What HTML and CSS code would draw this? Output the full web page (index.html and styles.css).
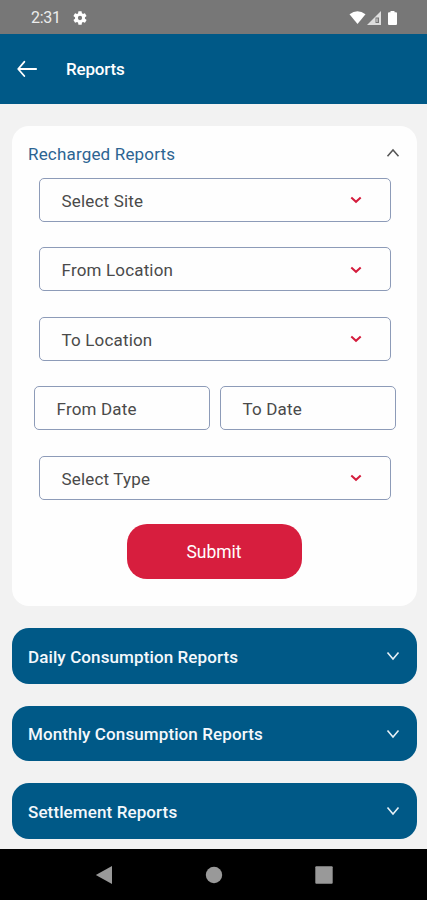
FILE: index.html
```html
<!DOCTYPE html>
<html lang="en">
<head>
<meta charset="utf-8">
<title>Reports</title>
<link rel="stylesheet" href="styles.css">
</head>
<body>
<div class="screen">
  <div class="status">
    <span class="time">2:31</span>
    <svg class="gear" width="16" height="16" viewBox="0 0 24 24"><path fill="#fff" fill-rule="evenodd" d="M19.4 13a7.500 7.500 0 0 0 0-2l2.100-1.650a.5.5 0 0 0 .12-.64l-2-3.460a.5.5 0 0 0-.61-.22l-2.490 1a7.300 7.300 0 0 0-1.690-.98l-.38-2.650A.5.5 0 0 0 14 2h-4a.5.5 0 0 0-.49.42l-.38 2.650c-.61.25-1.170.59-1.690.98l-2.490-1a.5.5 0 0 0-.61.22l-2 3.460a.5.5 0 0 0 .12.640L4.600 11a7.500 7.500 0 0 0 0 2l-2.110 1.650a.5.5 0 0 0-.12.640l2 3.460c.12.220.39.300.61.220l2.490-1c.52.400 1.080.730 1.690.980l.38 2.650c.03.240.24.420.49.420h4c.25 0 .46-.18.490-.42l.38-2.650a7.300 7.300 0 0 0 1.690-.98l2.490 1c.23.090.49 0 .61-.22l2-3.460a.5.5 0 0 0-.12-.64zM12 15.200a3.200 3.200 0 1 1 0-6.400 3.200 3.200 0 0 1 0 6.400z"/></svg>
    <svg class="signals" width="50" height="16" viewBox="0 0 50 16"><path fill="#fff" d="M.5 4.300Q8.500-1.700 16.500 4.300L8.500 14z"/><path fill="#dedede" d="M32 1v14H18z"/><path fill="#777" d="M26.500 7.500h3.500v5.500h-3.500z"/><path fill="#e8e8e8" d="M27.500 8.500h1v3.500h-1z"/><path fill="#fff" d="M41.500 1h4v1.200h1.500a1 1 0 0 1 1 1V14a1 1 0 0 1-1 1H40a1 1 0 0 1-1-1V3.200a1 1 0 0 1 1-1h1.500z"/></svg>
  </div>
  <header class="appbar">
    <svg width="20" height="18" viewBox="0 0 20 18"><path class="line" d="M19.200 9H1.300M7.300 1.800L1.200 9l6.100 7"/></svg>
    <h1>Reports</h1>
  </header>
  <main class="content">
    <section class="card">
      <div class="card-head">
        <h2>Recharged Reports</h2>
        <svg class="chev dark" width="14" height="10" viewBox="0 0 14 10"><path d="M1.500 8.300L7 2l5.500 6.300"/></svg>
      </div>
      <div class="fields">
        <div class="field"><span>Select Site</span><svg class="chev red" width="12" height="8" viewBox="0 0 12 8"><path d="M1.300 1.500L6 5.800l4.700-4.300"/></svg></div>
        <div class="field"><span>From Location</span><svg class="chev red" width="12" height="8" viewBox="0 0 12 8"><path d="M1.300 1.500L6 5.800l4.700-4.300"/></svg></div>
        <div class="field"><span>To Location</span><svg class="chev red" width="12" height="8" viewBox="0 0 12 8"><path d="M1.300 1.500L6 5.800l4.700-4.300"/></svg></div>
        <div class="dates">
          <div class="field"><span>From Date</span></div>
          <div class="field"><span>To Date</span></div>
        </div>
        <div class="field"><span>Select Type</span><svg class="chev red" width="12" height="8" viewBox="0 0 12 8"><path d="M1.300 1.500L6 5.800l4.700-4.300"/></svg></div>
      </div>
      <button class="submit">Submit</button>
    </section>
    <div class="bar"><span>Daily Consumption Reports</span><svg class="chev white" width="14" height="10" viewBox="0 0 14 10"><path d="M1.500 1.500L7 8l5.500-6.500"/></svg></div>
    <div class="bar"><span>Monthly Consumption Reports</span><svg class="chev white" width="14" height="10" viewBox="0 0 14 10"><path d="M1.500 1.500L7 8l5.500-6.500"/></svg></div>
    <div class="bar"><span>Settlement Reports</span><svg class="chev white" width="14" height="10" viewBox="0 0 14 10"><path d="M1.500 1.500L7 8l5.500-6.500"/></svg></div>
  </main>
  <nav class="nav">
    <svg width="18" height="20" viewBox="0 0 18 20"><path fill="#999" d="M17 1v18L.8 10z"/></svg>
    <svg width="18" height="18" viewBox="0 0 18 18"><circle cx="9" cy="9" r="8.200" fill="#999"/></svg>
    <svg width="18" height="18" viewBox="0 0 18 18"><rect x=".3" y=".3" width="17.400" height="17.400" rx="1" fill="#999"/></svg>
  </nav>
</div>
</body>
</html>
```
FILE: styles.css
```css
* { box-sizing: border-box; }
body { margin: 0; font-family: Roboto, sans-serif; }
h1, h2 { margin: 0; }
.screen { width: 427px; height: 900px; display: flex; flex-direction: column; background: #f2f2f2; overflow: hidden; }
.status { height: 33.500px; flex: none; background: #777; display: flex; align-items: center; padding: 2px 28px 0 31px; }
.time { font-size: 16px; letter-spacing: -.3px; color: #ececec; width: 41px; }
.signals { margin-left: auto; }
.appbar { height: 70px; flex: none; background: #005987; display: flex; align-items: center; padding: 1px 17px 0; gap: 29px; color: #fff; }
.appbar h1 { font-size: 17px; font-weight: 500; letter-spacing: -.2px; }
.line { fill: none; stroke: #fff; stroke-width: 1.800; stroke-linecap: round; stroke-linejoin: round; }
.content { flex: 1; min-height: 0; overflow: hidden; padding: 22.500px 10.500px 0 11.500px; display: flex; flex-direction: column; gap: 22px; }
.card { flex: none; height: 480px; background: #fefefe; border-radius: 17px; display: flex; flex-direction: column; align-items: center; }
.card-head { align-self: stretch; height: 52px; padding: 4px 16.500px 0; display: flex; align-items: center; justify-content: space-between; }
.card-head h2 { font-size: 17px; font-weight: 400; color: #2c6492; letter-spacing: .18px; }
.card-head .chev { margin-top: -3px; }
.fields { width: 362px; margin-left: 1.200px; display: flex; flex-direction: column; align-items: center; gap: 25.400px; }
.field { width: 352px; height: 44px; border: 1.500px solid #8d9bb8; border-radius: 5px; display: flex; align-items: center; justify-content: space-between; padding: 2px 28px 0 22px; font-size: 17px; color: #4a4a4a; letter-spacing: .16px; }
.field .chev { margin-top: -1.500px; }
.dates { display: flex; gap: 10px; width: 362px; }
.dates .field { width: 176px; }
.chev { fill: none; flex: none; }
.dark { stroke: #555; stroke-width: 1.500; }
.red { stroke: #d41c3c; stroke-width: 2; }
.white { stroke: #e6f0f6; stroke-width: 1.600; }
.submit { margin-top: 24px; width: 175px; height: 55px; border: 0; border-radius: 20px; background: #d71e3e; color: #fff; font: 400 17.500px Roboto, sans-serif; padding: 2px 0 0; }
.bar { flex: none; height: 55.600px; border-radius: 17px; background: #005987; color: #f4f8fc; font-size: 17px; font-weight: 500; letter-spacing: .11px; padding: 2px 16.500px 0; display: flex; align-items: center; justify-content: space-between; }
.bar .chev { margin-top: -1px; }
.nav { flex: none; height: 51px; background: #000; display: flex; align-items: center; justify-content: center; gap: 92px; }
```
